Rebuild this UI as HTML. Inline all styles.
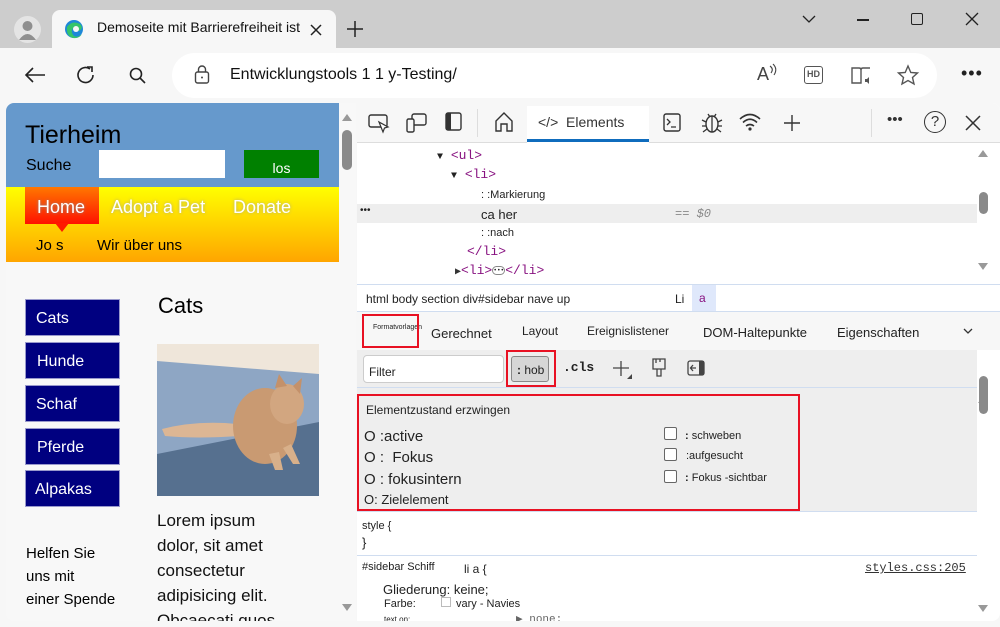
<!DOCTYPE html>
<html><head><meta charset="utf-8"><style>
*{box-sizing:border-box;margin:0;padding:0}
body{width:1000px;height:627px;overflow:hidden;background:#cdcdcd;font-family:"Liberation Sans",sans-serif;position:relative;color:#222}
.a{position:absolute}
.mono{font-family:"Liberation Mono",monospace}
svg{position:absolute;overflow:visible}
.tag{color:#881280}
</style></head><body>
<!-- title bar -->
<div class="a" style="left:14px;top:16px;width:27px;height:27px;border-radius:50%;background:#e4e4e4"></div>
<svg style="left:14px;top:16px" width="27" height="27"><circle cx="13.5" cy="10" r="5" fill="#8f8f8f"/><path d="M5 24 Q13.5 12 22 24 Z" fill="#8f8f8f"/></svg>
<div class="a" style="left:52px;top:10px;width:284px;height:40px;background:#f7f7f7;border-radius:8px 8px 0 0"></div>
<svg style="left:64px;top:19px" width="20" height="20"><circle cx="10" cy="10" r="9" fill="#1e88d8"/><path d="M3 8 Q8 1 16 5 Q20 9 15 12 Q10 13 9 9 Q6 13 10 17 Q14 19 18 15 Q15 20 9 19 Q2 17 3 8Z" fill="#35c46b"/><circle cx="12" cy="10" r="3" fill="#f7f7f7"/></svg>
<div class="a" style="left:97px;top:19px;font-size:14px;color:#111">Demoseite mit Barrierefreiheit ist</div>
<svg style="left:310px;top:24px" width="12" height="12"><path d="M1 1L11 11M11 1L1 11" stroke="#222" stroke-width="1.5"/></svg>
<svg style="left:346px;top:20px" width="18" height="18"><path d="M9 1V17M1 9H17" stroke="#222" stroke-width="1.5"/></svg>
<svg style="left:802px;top:15px" width="14" height="8"><path d="M1 1L7 7L13 1" stroke="#222" stroke-width="1.3" fill="none"/></svg>
<div class="a" style="left:857px;top:19px;width:12px;height:1.5px;background:#222"></div>
<div class="a" style="left:911px;top:13px;width:12px;height:12px;border:1.5px solid #222;border-radius:2px"></div>
<svg style="left:966px;top:13px" width="12" height="12"><path d="M0 0L12 12M12 0L0 12" stroke="#222" stroke-width="1.3"/></svg>
<!-- toolbar -->
<div class="a" style="left:0;top:48px;width:1000px;height:579px;background:#f7f7f7"></div>
<svg style="left:24px;top:66px" width="22" height="18"><path d="M21 9H2M9 2L2 9L9 16" stroke="#222" stroke-width="1.6" fill="none"/></svg>
<svg style="left:76px;top:65px" width="20" height="20"><path d="M17 10A7.5 7.5 0 1 1 14 4" stroke="#222" stroke-width="1.6" fill="none"/><path d="M11 2H16V7" stroke="#222" stroke-width="1.6" fill="none"/></svg>
<svg style="left:129px;top:67px" width="18" height="18"><circle cx="7" cy="7" r="5.5" stroke="#222" stroke-width="1.6" fill="none"/><path d="M11 11L16 16" stroke="#222" stroke-width="1.6"/></svg>
<div class="a" style="left:172px;top:53px;width:765px;height:45px;background:#fff;border-radius:23px"></div>
<svg style="left:194px;top:65px" width="16" height="20"><rect x="1.5" y="7" width="13" height="11" rx="2" stroke="#444" stroke-width="1.4" fill="none"/><path d="M4.5 7V4.5A3.5 3.5 0 0 1 11.5 4.5V7" stroke="#444" stroke-width="1.4" fill="none"/><circle cx="8" cy="12.5" r="1" fill="#444"/></svg>
<div class="a" style="left:230px;top:66px;font-size:16px;color:#111">Entwicklungstools 1 1 y-Testing/</div>
<div class="a" style="left:757px;top:64px;font-size:18px;color:#444">A</div><svg style="left:769px;top:64px" width="10" height="12"><path d="M1 2Q5 5 2 9M4 0Q9 5 5 11" stroke="#444" stroke-width="1.1" fill="none"/></svg>
<div class="a" style="left:804px;top:66px;width:19px;height:18px;border:1.5px solid #555;border-radius:3px;font-size:9px;font-weight:bold;color:#555;text-align:center;line-height:15px">HD</div>
<svg style="left:851px;top:66px" width="22" height="20"><path d="M1 2H8Q10 2 10 4V17H1Z M19 2H12Q10 2 10 4V17" stroke="#555" stroke-width="1.4" fill="none"/><path d="M14 13H16L18 11V18L16 16H14Z" fill="#555"/></svg>
<svg style="left:897px;top:65px" width="22" height="20"><path d="M11 1L13.8 7.5L20.5 8L15.5 12.5L17 19L11 15.5L5 19L6.5 12.5L1.5 8L8.2 7.5Z" stroke="#555" stroke-width="1.4" fill="none"/></svg>
<div class="a" style="left:961px;top:63px;font-size:18px;color:#222;letter-spacing:1px">•••</div>
<!-- web page -->
<div class="a" style="left:6px;top:103px;width:333px;height:518px;background:#f8f8f8;border-radius:8px 0 0 8px;overflow:hidden">
 <div class="a" style="left:0;top:0;width:333px;height:84px;background:#6699cc"></div>
 <div class="a" style="left:19px;top:18px;font-size:25px;color:#000">Tierheim</div>
 <div class="a" style="left:20px;top:54px;font-size:16px;color:#000">Suche</div>
 <div class="a" style="left:93px;top:47px;width:126px;height:28px;background:#fff"></div>
 <div class="a" style="left:238px;top:47px;width:75px;height:28px;background:#008000;color:#fff;font-size:14px;text-align:center;padding-top:10px">los</div>
 <div class="a" style="left:0;top:84px;width:333px;height:75px;background:linear-gradient(#ffff00,#ffa500)"></div>
 <div class="a" style="left:19px;top:84px;width:74px;height:37px;background:linear-gradient(#ff7700,#ff1100)"></div>
 <div class="a" style="left:49px;top:120px;width:0;height:0;border-left:7px solid transparent;border-right:7px solid transparent;border-top:9px solid #ff1a00"></div>
 <div class="a" style="left:31px;top:94px;font-size:18px;color:#fff;text-shadow:0 0 3px #888">Home</div>
 <div class="a" style="left:105px;top:94px;font-size:18px;color:#fff;text-shadow:0 0 3px #aa8">Adopt a Pet</div>
 <div class="a" style="left:227px;top:94px;font-size:18px;color:#fff;text-shadow:0 0 3px #aa8">Donate</div>
 <div class="a" style="left:30px;top:134px;font-size:15px;color:#000">Jo s</div>
 <div class="a" style="left:91px;top:134px;font-size:15px;color:#000">Wir über uns</div>
 <div class="a" style="left:19px;top:196px;width:95px;height:37px;background:#000080;border:1px solid #99c;color:#fff;font-size:16px;padding:10px 0 0 10px">Cats</div>
 <div class="a" style="left:19px;top:239px;width:95px;height:37px;background:#000080;border:1px solid #99c;color:#fff;font-size:16px;padding:10px 0 0 11px">Hunde</div>
 <div class="a" style="left:19px;top:282px;width:95px;height:37px;background:#000080;border:1px solid #99c;color:#fff;font-size:16px;padding:10px 0 0 10px">Schaf</div>
 <div class="a" style="left:19px;top:325px;width:95px;height:37px;background:#000080;border:1px solid #99c;color:#fff;font-size:16px;padding:10px 0 0 11px">Pferde</div>
 <div class="a" style="left:19px;top:367px;width:95px;height:37px;background:#000080;border:1px solid #99c;color:#fff;font-size:16px;padding:10px 0 0 9px">Alpakas</div>
 <div class="a" style="left:20px;top:439px;font-size:15px;color:#000;line-height:23px">Helfen Sie<br>uns mit<br>einer Spende</div>
 <div class="a" style="left:152px;top:190px;font-size:22px;color:#000">Cats</div>
 <svg style="left:151px;top:241px" width="162" height="152">
  <rect width="162" height="152" fill="#8ea6c4"/>
  <path d="M0 0H162V30L0 17Z" fill="#efe6da"/>
  <path d="M0 110L162 78V152H0Z" fill="#56708f"/>
  <path d="M5 85Q40 76 80 80L82 92Q40 95 8 92Z" fill="#dcb694"/>
  <ellipse cx="108" cy="82" rx="32" ry="38" fill="#c99a72"/>
  <ellipse cx="130" cy="60" rx="17" ry="20" fill="#d2a680"/>
  <path d="M118 44L122 30L130 42M136 42L145 34L143 50" fill="#c4916a"/>
  <path d="M112 110L118 126H126L122 108M126 104L136 120H143L134 100" fill="#d8b08a"/>
 </svg>
 <div class="a" style="left:151px;top:405px;font-size:17px;color:#111;line-height:25px">Lorem ipsum<br>dolor, sit amet<br>consectetur<br>adipisicing elit.<br>Obcaecati quos</div>
</div>
<!-- page scrollbar -->
<div class="a" style="left:339px;top:103px;width:17px;height:518px;background:#f8f8f8"></div>
<svg style="left:342px;top:113px" width="10" height="8"><path d="M0 8L5 1L10 8Z" fill="#999"/></svg>
<div class="a" style="left:342px;top:130px;width:10px;height:40px;border-radius:5px;background:#8a8a8a"></div>
<svg style="left:342px;top:604px" width="10" height="8"><path d="M0 0L5 7L10 0Z" fill="#999"/></svg>
<!-- devtools -->
<div class="a" style="left:357px;top:103px;width:643px;height:518px;background:#fff;border-radius:0 8px 8px 0;overflow:hidden">
 <div class="a" style="left:0;top:0;width:643px;height:40px;background:#f7f7f7;border-bottom:1px solid #ddd"></div>
 <svg style="left:11px;top:10px" width="22" height="20"><rect x="1" y="2" width="18" height="12" rx="2" stroke="#333" stroke-width="1.4" fill="none"/><path d="M11 9L15 19L16.5 15L20 14Z" fill="#fff" stroke="#333" stroke-width="1.2"/></svg>
 <svg style="left:49px;top:9px" width="22" height="22"><rect x="6" y="2" width="14" height="11" rx="2" stroke="#333" stroke-width="1.4" fill="none"/><rect x="1" y="7" width="7" height="13" rx="1.5" stroke="#333" stroke-width="1.4" fill="#f7f7f7"/></svg>
 <svg style="left:88px;top:9px" width="18" height="20"><rect x="1" y="1" width="15" height="17" rx="2" stroke="#333" stroke-width="1.4" fill="none"/><rect x="1" y="1" width="5" height="17" fill="#333"/></svg>
 <div class="a" style="left:120px;top:6px;width:1px;height:28px;background:#ddd"></div>
 <svg style="left:137px;top:8px" width="20" height="22"><path d="M2 10L10 2L18 10V20H13V13H7V20H2Z" stroke="#333" stroke-width="1.4" fill="none"/></svg>
 <div class="a" style="left:170px;top:3px;width:122px;height:37px;background:#fff"></div>
 <div class="a" style="left:170px;top:36px;width:122px;height:3px;background:#0f6cbd"></div>
 <div class="a" style="left:181px;top:11px;font-size:14px;color:#333">&lt;/&gt;&nbsp; Elements</div>
 <svg style="left:306px;top:10px" width="18" height="20"><rect x="1" y="1" width="16" height="17" rx="2" stroke="#333" stroke-width="1.4" fill="none"/><path d="M4 6L7 9L4 12M8 14H13" stroke="#333" stroke-width="1.3" fill="none"/></svg>
 <svg style="left:344px;top:8px" width="22" height="24"><ellipse cx="11" cy="13" rx="6" ry="8" stroke="#333" stroke-width="1.4" fill="none"/><path d="M11 5V21M1 9L5 11M21 9L17 11M1 15H5M21 15H17M2 21L6 18M20 21L16 18M7 3L9 6M15 3L13 6" stroke="#333" stroke-width="1.3"/></svg>
 <svg style="left:382px;top:10px" width="22" height="18"><path d="M1 6Q11 -3 21 6M4 9.5Q11 3 18 9.5M7 13Q11 10 15 13" stroke="#333" stroke-width="1.6" fill="none"/><circle cx="11" cy="16" r="1.6" fill="#333"/></svg>
 <svg style="left:426px;top:11px" width="18" height="18"><path d="M9 1V17M1 9H17" stroke="#333" stroke-width="1.4"/></svg>
 <div class="a" style="left:514px;top:6px;width:1px;height:28px;background:#ddd"></div>
 <div class="a" style="left:530px;top:8px;font-size:15px;color:#333">•••</div>
 <div class="a" style="left:567px;top:8px;width:22px;height:22px;border:1.5px solid #333;border-radius:50%;text-align:center;font-size:15px;line-height:19px;color:#333">?</div>
 <svg style="left:608px;top:12px" width="16" height="16"><path d="M1 1L15 15M15 1L1 15" stroke="#333" stroke-width="1.5"/></svg>
 <!-- DOM -->
 <div class="a mono" style="left:80px;top:45px;font-size:13px"><span style="font-size:10px">▼</span> <span class="tag">&lt;ul&gt;</span></div>
 <div class="a mono" style="left:94px;top:64px;font-size:13px"><span style="font-size:10px">▼</span> <span class="tag">&lt;li&gt;</span></div>
 <div class="a" style="left:124px;top:86px;font-size:11px;color:#222">: :Markierung</div>
 <div class="a" style="left:0;top:101px;width:620px;height:19px;background:#eeeeee"></div>
 <div class="a" style="left:3px;top:102px;font-size:10px">•••</div>
 <div class="a" style="left:124px;top:104px;font-size:13px;color:#222">ca her</div>
 <div class="a mono" style="left:318px;top:104px;font-size:12px;color:#888;font-style:italic">== $0</div>
 <div class="a" style="left:124px;top:124px;font-size:11px">: :nach</div>
 <div class="a mono tag" style="left:110px;top:141px;font-size:13px">&lt;/li&gt;</div>
 <div class="a mono" style="left:98px;top:160px;font-size:13px"><span style="font-size:10px;color:#333">▶</span><span class="tag">&lt;li&gt;</span><span style="display:inline-block;width:13px;height:9px;border:1px solid #888;border-radius:5px;font-size:6px;line-height:7px;text-align:center;vertical-align:middle">•••</span><span class="tag">&lt;/li&gt;</span></div>
 <svg style="left:621px;top:46px" width="10" height="8"><path d="M0 8L5 1L10 8Z" fill="#999"/></svg>
 <div class="a" style="left:622px;top:89px;width:9px;height:22px;border-radius:5px;background:#8a8a8a"></div>
 <svg style="left:621px;top:160px" width="10" height="8"><path d="M0 0L5 7L10 0Z" fill="#999"/></svg>
 <!-- breadcrumb -->
 <div class="a" style="left:0;top:181px;width:643px;height:1px;background:#d0ddf0"></div>
 <div class="a" style="left:9px;top:189px;font-size:12px;color:#222">html body section div#sidebar nave up</div>
 <div class="a" style="left:318px;top:189px;font-size:12px">Li</div>
 <div class="a" style="left:335px;top:182px;width:24px;height:26px;background:#dfe8fb"></div>
 <div class="a" style="left:342px;top:188px;font-size:12px;color:#881280">a</div>
 <div class="a" style="left:0;top:208px;width:643px;height:1px;background:#d0ddf0"></div>
 <!-- tabs -->
 <div class="a" style="left:0;top:209px;width:643px;height:38px;background:#f7f7f7"></div>
 <div class="a" style="left:16px;top:221px;font-size:7px">Formatvorlagen</div>
 <div class="a" style="left:74px;top:223px;font-size:13px">Gerechnet</div>
 <div class="a" style="left:165px;top:221px;font-size:12px">Layout</div>
 <div class="a" style="left:230px;top:221px;font-size:12px">Ereignislistener</div>
 <div class="a" style="left:346px;top:222px;font-size:13px">DOM-Haltepunkte</div>
 <div class="a" style="left:480px;top:222px;font-size:13px">Eigenschaften</div>
 <svg style="left:606px;top:225px" width="10" height="7"><path d="M1 1L5 5L9 1" stroke="#333" stroke-width="1.3" fill="none"/></svg>
 <!-- filter bar -->
 <div class="a" style="left:0;top:247px;width:620px;height:38px;background:#eeeeee;border-bottom:1px solid #d0ddf0"></div>
 <div class="a" style="left:6px;top:252px;width:141px;height:28px;background:#fff;border:1px solid #ccc;border-radius:4px;font-size:12px;padding:9px 0 0 5px">Filter</div>
 <div class="a" style="left:154px;top:253px;width:38px;height:26px;background:#d6d6d6;border:1px solid #888;border-radius:3px;font-size:12px;padding:6px 0 0 5px"><b>:</b> hob</div>
 <div class="a mono" style="left:206px;top:257px;font-size:13px;font-weight:bold">.cls</div>
 <svg style="left:256px;top:257px" width="20" height="20"><path d="M8 1V16M0 8H16" stroke="#444" stroke-width="1.3"/><path d="M19 14V19H14Z" fill="#444"/></svg>
 <svg style="left:295px;top:255px" width="14" height="20"><path d="M1 1H13V11H1ZM4 1V5M8 1V4M5 11V18H9V11" stroke="#444" stroke-width="1.3" fill="none"/></svg>
 <svg style="left:330px;top:257px" width="18" height="16"><rect x="1" y="1" width="16" height="14" rx="2" stroke="#444" stroke-width="1.3" fill="none"/><rect x="12" y="1" width="5" height="14" fill="#444"/><path d="M9 8H4M6 5L3.5 8L6 11" stroke="#444" stroke-width="1.3" fill="none"/></svg>
 <!-- element state -->
 <div class="a" style="left:0;top:285px;width:620px;height:124px;background:#eeeeee;border-bottom:1px solid #d0ddf0"></div>
 <div class="a" style="left:9px;top:300px;font-size:12px">Elementzustand erzwingen</div>
 <div class="a" style="left:7px;top:325px;font-size:15px">O :active</div>
 <div class="a" style="left:7px;top:346px;font-size:15px">O :&nbsp; Fokus</div>
 <div class="a" style="left:7px;top:368px;font-size:15px">O : fokusintern</div>
 <div class="a" style="left:7px;top:389px;font-size:13px">O: Zielelement</div>
 <div class="a" style="left:307px;top:324px;width:13px;height:13px;border:1px solid #666;border-radius:2px;background:#fff"></div>
 <div class="a" style="left:307px;top:345px;width:13px;height:13px;border:1px solid #666;border-radius:2px;background:#fff"></div>
 <div class="a" style="left:307px;top:367px;width:13px;height:13px;border:1px solid #666;border-radius:2px;background:#fff"></div>
 <div class="a" style="left:328px;top:327px;font-size:11px"><b>:</b> schweben</div>
 <div class="a" style="left:329px;top:347px;font-size:11px">:aufgesucht</div>
 <div class="a" style="left:328px;top:369px;font-size:11px"><b>:</b> Fokus -sichtbar</div>
 <!-- styles -->
 <div class="a" style="left:5px;top:417px;font-size:11px">style {</div>
 <div class="a" style="left:5px;top:432px;font-size:13px">}</div>
 <div class="a" style="left:0;top:452px;width:620px;height:1px;background:#d0ddf0"></div>
 <div class="a" style="left:5px;top:458px;font-size:11px">#sidebar Schiff</div>
 <div class="a" style="left:107px;top:459px;font-size:12px">li a {</div>
 <div class="a mono" style="left:508px;top:458px;font-size:12px;color:#333;text-decoration:underline">styles.css:205</div>
 <div class="a" style="left:26px;top:479px;font-size:13px">Gliederung: keine;</div>
 <div class="a" style="left:27px;top:495px;font-size:11px">Farbe:</div>
 <div class="a" style="left:84px;top:494px;width:10px;height:10px;border:1px solid #bbb"></div>
 <div class="a" style="left:99px;top:495px;font-size:11px">vary - Navies</div>
 <div class="a" style="left:27px;top:512px;font-size:8px">text on:</div>
 <div class="a mono" style="left:159px;top:509px;font-size:11px;color:#666">▶ none;</div>
 <svg style="left:621px;top:292px" width="10" height="8"><path d="M0 8L5 1L10 8Z" fill="#999"/></svg>
 <div class="a" style="left:622px;top:273px;width:9px;height:38px;border-radius:5px;background:#8a8a8a"></div>
 <svg style="left:621px;top:502px" width="10" height="8"><path d="M0 0L5 7L10 0Z" fill="#999"/></svg>
</div>
<!-- red highlight boxes -->
<div class="a" style="left:362px;top:314px;width:57px;height:34px;border:2px solid #e81123"></div>
<div class="a" style="left:506px;top:350px;width:50px;height:37px;border:2px solid #e81123"></div>
<div class="a" style="left:357px;top:394px;width:443px;height:117px;border:2px solid #e81123"></div>
</body></html>
